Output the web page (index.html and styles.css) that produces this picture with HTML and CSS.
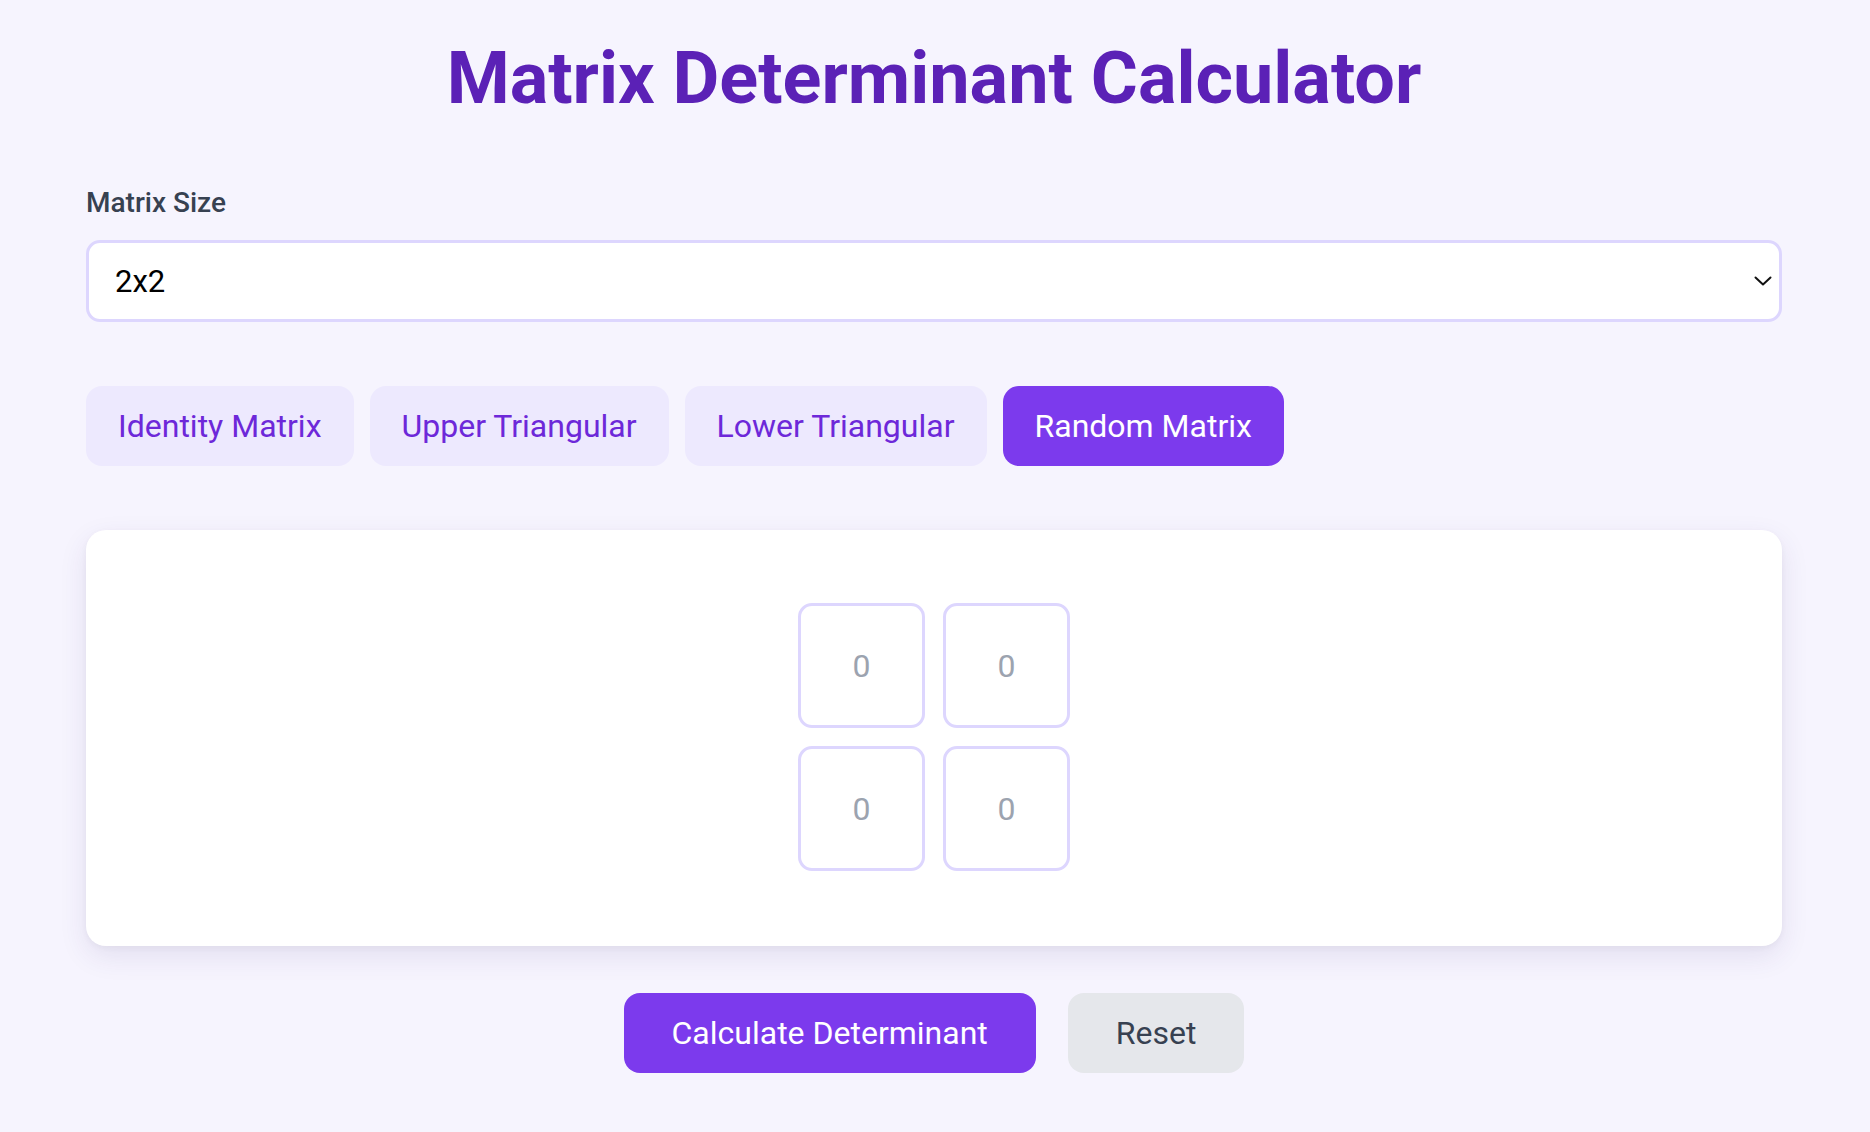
FILE: index.html
```html
<!DOCTYPE html>
<html lang="en">
<head>
<meta charset="utf-8">
<title>Matrix Determinant Calculator</title>
<link rel="stylesheet" href="styles.css">
</head>
<body>
<main class="container">
  <h1 class="title">Matrix Determinant Calculator</h1>

  <label class="label" for="size">Matrix Size</label>
  <div class="select-wrap">
    <select id="size" class="select">
      <option>2x2</option>
      <option>3x3</option>
      <option>4x4</option>
    </select>
    <svg class="chevron" width="18" height="10" viewBox="0 0 18 10" aria-hidden="true">
      <path d="M1.5 1.5 L9 8.5 L16.5 1.5" fill="none" stroke="#111" stroke-width="2" stroke-linecap="round" stroke-linejoin="round"/>
    </svg>
  </div>

  <div class="presets">
    <button class="preset">Identity Matrix</button>
    <button class="preset">Upper Triangular</button>
    <button class="preset">Lower Triangular</button>
    <button class="preset preset-active">Random Matrix</button>
  </div>

  <section class="card">
    <div class="grid">
      <input class="cell" type="text" placeholder="0">
      <input class="cell" type="text" placeholder="0">
      <input class="cell" type="text" placeholder="0">
      <input class="cell" type="text" placeholder="0">
    </div>
  </section>

  <div class="actions">
    <button class="btn btn-primary">Calculate Determinant</button>
    <button class="btn btn-secondary">Reset</button>
  </div>
</main>
</body>
</html>
```

FILE: styles.css
```css
* { box-sizing: border-box; }

html, body {
  margin: 0;
  padding: 0;
}

body {
  background: #f6f4fe;
  font-family: Roboto, "Liberation Sans", Arial, sans-serif;
  color: #111827;
}

.container {
  margin: 0 88px 0 86px;
  padding-top: 43px;
  display: flex;
  flex-direction: column;
}

.title {
  margin: 0;
  font-size: 72px;
  line-height: 72px;
  font-weight: 700;
  color: #5b21b6;
  text-align: center;
}

.label {
  margin-top: 74px;
  font-size: 28px;
  line-height: 28px;
  font-weight: 500;
  color: #374151;
}

.select-wrap {
  position: relative;
  margin-top: 23px;
}

.select {
  display: block;
  width: 100%;
  height: 82px;
  appearance: none;
  -webkit-appearance: none;
  background: #ffffff;
  border: 3px solid #ddd6fe;
  border-radius: 14px;
  padding: 0 26px;
  font-family: Roboto, "Liberation Sans", Arial, sans-serif;
  font-size: 31px;
  color: #000;
  outline: none;
}

.chevron {
  position: absolute;
  right: 10px;
  top: 36px;
  pointer-events: none;
}

.presets {
  display: flex;
  gap: 16px;
  margin-top: 64px;
}

.preset {
  height: 80px;
  padding: 0 32px;
  border: none;
  border-radius: 16px;
  background: #ede9fe;
  color: #6d28d9;
  font-family: Roboto, "Liberation Sans", Arial, sans-serif;
  font-size: 32px;
  font-weight: 400;
  cursor: pointer;
}

.preset-active {
  background: #7c3aed;
  color: #ffffff;
}

.card {
  margin-top: 64px;
  height: 416px;
  background: #ffffff;
  border-radius: 20px;
  box-shadow: 0 10px 28px rgba(60, 40, 120, 0.10), 0 2px 6px rgba(0, 0, 0, 0.04);
  display: flex;
  align-items: center;
  justify-content: center;
}

.grid {
  display: grid;
  grid-template-columns: repeat(2, 127px);
  grid-auto-rows: 125px;
  gap: 18px;
  margin-top: -2px;
}

.cell {
  width: 127px;
  height: 125px;
  border: 3px solid #ddd6fe;
  border-radius: 14px;
  background: #ffffff;
  text-align: center;
  font-family: Roboto, "Liberation Sans", Arial, sans-serif;
  font-size: 32px;
  color: #111827;
  outline: none;
}

.cell::placeholder {
  color: #9ca3af;
}

.actions {
  display: flex;
  justify-content: center;
  gap: 32px;
  margin-top: 47px;
}

.btn {
  height: 80px;
  padding: 0 48px;
  border: none;
  border-radius: 16px;
  font-family: Roboto, "Liberation Sans", Arial, sans-serif;
  font-size: 32px;
  font-weight: 400;
  cursor: pointer;
}

.btn-primary {
  background: #7c3aed;
  color: #ffffff;
}

.btn-secondary {
  background: #e5e7eb;
  color: #374151;
}
```
